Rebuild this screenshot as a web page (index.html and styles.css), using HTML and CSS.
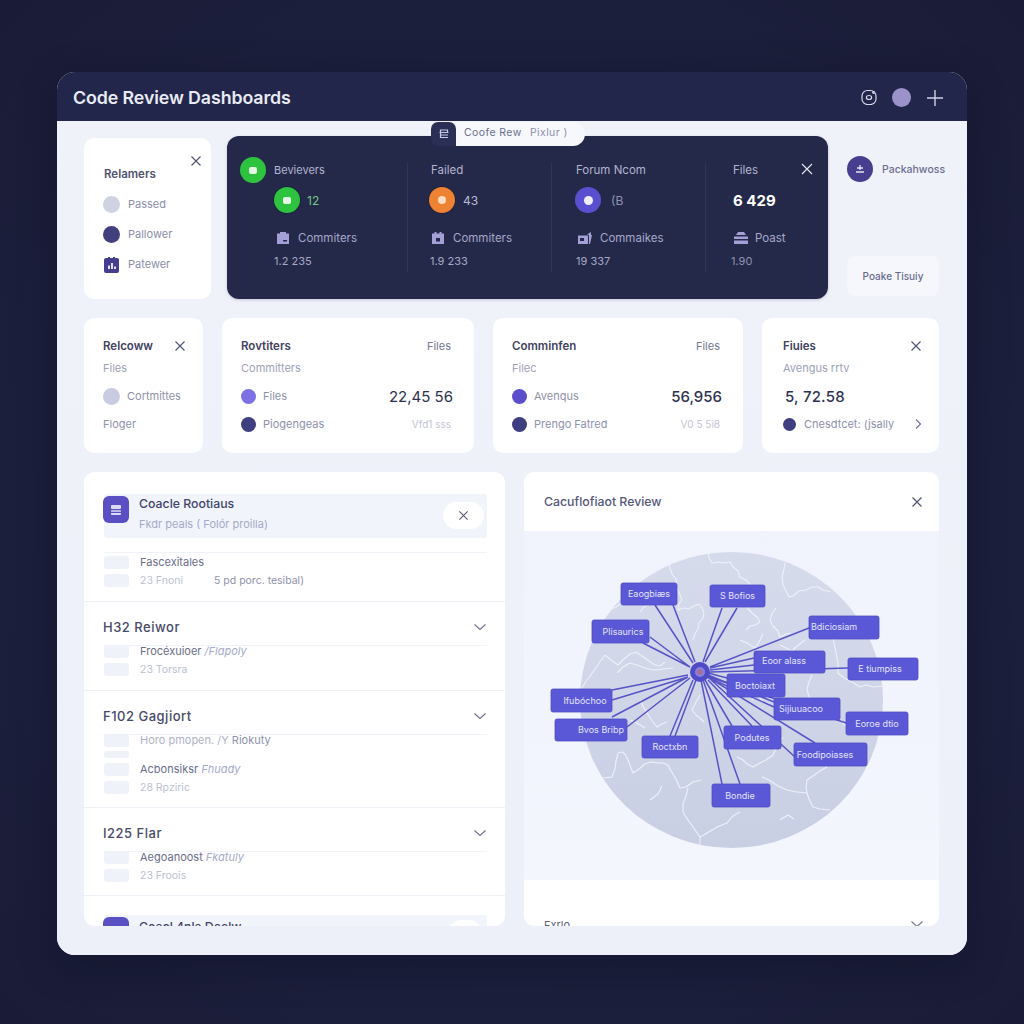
FILE: index.html
```html
<!DOCTYPE html>
<html lang="en">
<head>
<meta charset="utf-8">
<title>Code Review Dashboards</title>
<link rel="stylesheet" href="styles.css">
</head>
<body>
<div class="window">
  <header class="topbar">
    <h1 class="brand">Code Review Dashboards</h1>
    <div class="top-actions">
      <svg class="ig" viewBox="0 0 16 16"><rect x="1" y="1.500" width="14" height="14" rx="5.500"/><ellipse cx="8" cy="8.500" rx="2.600" ry="2"/><circle cx="12.500" cy="3.500" r=".8"/></svg>
      <span class="avatar"></span>
      <svg class="plus" viewBox="0 0 16 16"><path d="M8 0v16M0 8h16"/></svg>
    </div>
  </header>
  <main class="content">
    <div class="tab">
      <span class="tab-icon"><svg viewBox="0 0 14 14"><path d="M3.500 5V3h7v2M2.500 5.500h9M3.500 5.500v5h7.500M3 8h8"/></svg></span>
      <span class="tab-label">Coofe Rew <i>Pixlur )</i></span>
    </div>

    <section class="row-top">
      <div class="card legend">
        <svg class="x x-legend" viewBox="0 0 12 12"><path d="M1.500 1.500l9 9M10.500 1.500l-9 9"/></svg>
        <div class="legend-title">Relamers</div>
        <div class="legend-row"><span class="dot-17 c-grey"></span>Passed</div>
        <div class="legend-row"><span class="dot-17 c-navy"></span>Pallower</div>
        <div class="legend-row"><svg class="sq" viewBox="0 0 17 17"><path d="M1 4a2 2 0 0 1 2-2h2V1h2v1h3V1h2v1h2a2 2 0 0 1 2 2v11a2 2 0 0 1-2 2H3a2 2 0 0 1-2-2z" fill="#453d8f"/><path d="M5 13V9.500h2V13zM8 13V7h2v6zM11 13v-2.500h2V13z" fill="#e3e2f5"/></svg>Patewer</div>
      </div>

      <div class="stats">
        <svg class="x x-stats" viewBox="0 0 12 12"><path d="M1 1l10 10M11 1L1 11"/></svg>
        <div class="stat s1">
          <div class="s-head"><span class="pip green"><b></b></span>Bevievers</div>
          <div class="s-main ind1"><span class="pip green ring"><b></b></span><span class="num-green">12</span></div>
          <div class="s-sub ind2"><svg class="mini" viewBox="0 0 14 14"><path d="M1 2.500h3V1h6v1.500h3V13H1zM7 9h4v1.500H7z" fill-rule="evenodd"/></svg>Commiters</div>
          <div class="s-val ind1">1.2 235</div>
        </div>
        <div class="stat s2">
          <div class="s-head">Failed</div>
          <div class="s-main back"><span class="pip orange ring"><b></b></span>43</div>
          <div class="s-sub"><svg class="mini" viewBox="0 0 14 14"><path d="M1 2.500h2.500V1h2v1.500h3V1h2v1.500H13V13H1zM5 7v3.500h4V7z" fill-rule="evenodd"/></svg>Commiters</div>
          <div class="s-val back1">1.9 233</div>
        </div>
        <div class="stat s3">
          <div class="s-head">Forum Ncom</div>
          <div class="s-main back1"><span class="pip violet"><b></b></span><span class="dim gap3">(B</span></div>
          <div class="s-sub ind3"><svg class="mini" viewBox="0 0 14 14"><path d="M0 4.500h10V13H0zM2 7v3h4V7zM9 3.500L13 1v3h1l-2 9h-1V4z" fill-rule="evenodd"/></svg>Commaikes</div>
          <div class="s-val">19 337</div>
        </div>
        <div class="stat s4">
          <div class="s-head">Files</div>
          <div class="s-big">6 429</div>
          <div class="s-sub gap6"><svg class="mini wide" viewBox="0 0 16 14"><path d="M3 4l2-3h6l2 3zM1 5.500h14V8H1zM1 9.500h14V13H1z"/></svg>Poast</div>
          <div class="s-val back2 dim">1.90</div>
        </div>
      </div>

      <div class="side">
        <div class="side-user"><span class="side-badge"><svg viewBox="0 0 12 12"><path d="M6 2v5M3 5h6M2 9h8"/></svg></span>Packahwoss</div>
        <div class="side-btn">Poake Tisuiy</div>
      </div>
    </section>

    <section class="row-metrics">
      <div class="card metric">
        <div class="m-line m1"><strong>Relcoww</strong><svg class="x x-m" viewBox="0 0 12 12"><path d="M1.500 1.500l9 9M10.500 1.500l-9 9"/></svg></div>
        <div class="m-line m2">Files</div>
        <div class="m-line m3"><span class="dot-17 c-grey2"></span><span class="m-key">Cortmittes</span></div>
        <div class="m-line m4 m-plain">Floger</div>
      </div>
      <div class="card metric">
        <div class="m-line m1"><strong>Rovtiters</strong><span class="m-end">Files</span></div>
        <div class="m-line m2">Committers</div>
        <div class="m-line m3"><span class="dot-15 c-lilac"></span><span class="m-key">Files</span><span class="m-num">22,45 56</span></div>
        <div class="m-line m4"><span class="dot-15 c-navy2"></span><span class="m-key">Piogengeas</span><span class="m-faint">Vfd1 sss</span></div>
      </div>
      <div class="card metric">
        <div class="m-line m1"><strong>Comminfen</strong><span class="m-end">Files</span></div>
        <div class="m-line m2">Filec</div>
        <div class="m-line m3"><span class="dot-15 c-indigo"></span><span class="m-key">Avenqus</span><span class="m-num m-bold">56,956</span></div>
        <div class="m-line m4"><span class="dot-15 c-navy2"></span><span class="m-key">Prengo Fatred</span><span class="m-faint">V0 5 5i8</span></div>
      </div>
      <div class="card metric metric-last">
        <div class="m-line m1"><strong>Fiuies</strong><svg class="x x-m" viewBox="0 0 12 12"><path d="M1.500 1.500l9 9M10.500 1.500l-9 9"/></svg></div>
        <div class="m-line m2">Avengus rrtv</div>
        <div class="m-line m3"><span class="m-solo">5, 72.58</span></div>
        <div class="m-line m4"><span class="dot-13 c-navy2"></span><span class="m-key">Cnesdtcet: (jsally</span><svg class="chev-r" viewBox="0 0 8 12"><path d="M2 1.500L6.500 6 2 10.500"/></svg></div>
      </div>
    </section>

    <section class="row-main">
      <div class="card list">
        <div class="sec sec1">
          <div class="strip">
            <span class="strip-icon"><svg viewBox="0 0 14 14"><path d="M3 2h8a1 1 0 0 1 1 1v2a1 1 0 0 1-1 1H3a1 1 0 0 1-1-1V3a1 1 0 0 1 1-1zM3 7.200h8a1 1 0 0 1 1 1v.6H2v-.6a1 1 0 0 1 1-1zM2 10h10v1a1 1 0 0 1-1 1H3a1 1 0 0 1-1-1z"/></svg></span>
            <div class="strip-text"><div class="strip-title">Coacle Rootiaus</div><div class="strip-sub">Fkdr peals ( Folór proilla)</div></div>
            <span class="strip-close"><svg class="x x-pill" viewBox="0 0 12 12"><path d="M1.500 1.500l9 9M10.500 1.500l-9 9"/></svg></span>
          </div>
          <div class="rows rows-first">
            <div class="rw"><span class="thumb"></span><span class="t-main">Fascexitales</span></div>
            <div class="rw"><span class="thumb"></span><span class="t-faint">23 Fnoni</span><span class="t-extra">5 pd porc. tesibal)</span></div>
          </div>
        </div>
        <div class="sec sec2">
          <div class="sec-head"><span>H32 Reiwor</span><svg class="chev" viewBox="0 0 14 8"><path d="M1.500 1.500L7 6.500l5.500-5"/></svg></div>
          <div class="rows">
            <div class="rw"><span class="thumb"></span><span class="t-main">Frocéxuioer <em>/Flapoly</em></span></div>
            <div class="rw"><span class="thumb"></span><span class="t-faint">23 Torsra</span></div>
          </div>
        </div>
        <div class="sec sec3">
          <div class="sec-head"><span>F102 Gagjiort</span><svg class="chev" viewBox="0 0 14 8"><path d="M1.500 1.500L7 6.500l5.500-5"/></svg></div>
          <div class="rows">
            <div class="rw"><span class="thumb"></span><span class="t-soft">Horo pmopen. /Y <u>Riokuty</u></span></div>
            <span class="thumb thin"></span>
            <div class="rw"><span class="thumb"></span><span class="t-main">Acbonsiksr <em>Fhuady</em></span></div>
            <div class="rw"><span class="thumb"></span><span class="t-faint">28 Rpziric</span></div>
          </div>
        </div>
        <div class="sec sec4">
          <div class="sec-head"><span>I225 Flar</span><svg class="chev" viewBox="0 0 14 8"><path d="M1.500 1.500L7 6.500l5.500-5"/></svg></div>
          <div class="rows">
            <div class="rw"><span class="thumb"></span><span class="t-main">Aegoanoost <em>Fkatuly</em></span></div>
            <div class="rw"><span class="thumb"></span><span class="t-faint">23 Froois</span></div>
          </div>
        </div>
        <div class="sec5">
          <div class="strip">
            <span class="strip-icon"></span>
            <div class="strip-text"><div class="strip-title strip-low">Coacl 4nla Deelw</div></div>
            <span class="strip-close small"></span>
          </div>
        </div>
      </div>

      <div class="card panel">
        <div class="panel-head"><span>Cacuflofiaot Review</span><svg class="x x-panel" viewBox="0 0 12 12"><path d="M1.500 1.500l9 9M10.500 1.500l-9 9"/></svg></div>
        <div class="map">
          <svg class="map-svg" viewBox="524 531 415 349" width="415" height="349">
            <defs>
              <clipPath id="disc"><ellipse cx="731.500" cy="700" rx="151.500" ry="148"/></clipPath>
              <linearGradient id="discfill" x1="0" y1="0" x2="0" y2="1"><stop offset="0" stop-color="#d6dbec"/><stop offset="1" stop-color="#c9cfe3"/></linearGradient>
            </defs>
            <ellipse cx="731.500" cy="700" rx="151.500" ry="148" fill="url(#discfill)"/>
            <g class="borders" clip-path="url(#disc)">
              <path d="M669 565l3 9 4 5 1 9 3 7 2 5-3 4-1 6 6-2 5 1 5-3 5-2 3 4 2 5-1 5-4 5-1 6-3 5-2 6"/>
              <path d="M708 552l1 6 3 5 6-1 5 1 7-1 3 5 5 4 2 6 6 3 4 4 2 4-3 5-1 6-3 5 3 5 4 4 5 4 3 5-5 3-5 1-4 4"/>
              <path d="M785 563l-1 6-2 8 1 8 3 6 3 6 4-1 6-5 7-1 6-3 6 0 5 3 8 2"/>
              <path d="M776 608l-4 6-2 6 3 6 5 5 2 6 6-3 5-1M780 645l6 3 6 3 4-4 5-4 4-3"/>
              <path d="M597 618l6-4 6-4 7-3 8-6 5-4 3-6M640 612l4-5 5-3 2-5"/>
              <path d="M582 688l5-8 6-8 6-9 6-8 6 5 7 5 6-6 6-5 6-2 6 4 7 5 6 4 5 1 5-4M617 673l6-6 7-4 7 2 8 3 8 2 10-1 10-1"/>
              <path d="M603 778l9-1 3-8 1-8 2-8 4-1 3 2 3 6 5 13 6-4 6-5 6-2 7 1 5 0 5 2 3 6 5 8 4 9 6-1 7-5 8-2"/>
              <path d="M688 788l-2 8-3 8 0 8 5 8 5 7 7 10 0 8M700 837l7-4 10-6 10-4 6-7 7-4"/>
              <path d="M762 777l7 3 9 6 9 4 10 2 10 1 2 6 4 8 7 2 10 1M807 793l-1-6 1-7 6-4 7-5 7-4"/>
              <path d="M737 757l6 3 4 4 6 3 7-4 6-3 7-5 3-7 3-6 4-5M660 745l8-2 9-1 8-2"/>
              <path d="M833 633l1 10 2 10 2 10 0 10 6 5 8 4 8 5 6-2 8 2 8-1M812 675l-3 7-2 7 2 8 2 8 1 8"/>
              <path d="M640 700l4 8 5 8 4 6 4 5 5-3 5-2M630 720l7 3 8 5M700 695l-4 7-4 8 4 5 4 3 4 4"/>
              <path d="M740 640l7 3 8 5 4-6 4-8M752 700l6-5 5 7 6 2"/>
              <path d="M605 740l10-3 8 4M650 800l8-6 4-8M780 820l8-5 6 4M840 720l6 6 8 3"/>
            </g>
            <g class="spokes">
              <path d="M655 605L693 663M673 605L695 662M722 608L703 662M737 608L705 662M650 637L690 667M643 643L690 667"/>
              <path d="M809 628L710 667M754 658L710 668M754 665L710 670M848 668L710 672M727 678L708 673M727 683L708 677"/>
              <path d="M774 707L707 677M774 702L708 675M846 723L708 676M612 690L688 675M612 700L688 677M612 717L688 677M627 727L690 678"/>
              <path d="M670 736L693 680M675 736L696 680M722 784L701 680M740 784L703 680M732 726L705 680M752 726L708 680M815 743L708 677M795 757L708 677"/>
            </g>
            <circle cx="700" cy="672" r="10" fill="#4f4bc6"/>
            <circle cx="700" cy="672" r="5" fill="#8681dc"/>
            <circle cx="700" cy="672" r="2.500" fill="#b3688f"/>
            <g class="node"><rect x="621" y="583" width="56" height="22" rx="2"/><text x="649" y="597">Eaogbiæs</text></g>
            <g class="node"><rect x="710" y="585" width="55" height="22" rx="2"/><text x="737.500" y="599">S Bofios</text></g>
            <g class="node"><rect x="592" y="620" width="57" height="23" rx="2"/><text x="623" y="635">Plisaurics</text></g>
            <g class="node"><rect x="809" y="616" width="70" height="23" rx="2"/><text x="834" y="630">Bdiciosiam</text></g>
            <g class="node"><rect x="754" y="651" width="71" height="22" rx="2"/><text x="784" y="664">Eoor alass</text></g>
            <g class="node"><rect x="848" y="658" width="70" height="22" rx="2"/><text x="880" y="672">E tiumpiss</text></g>
            <g class="node"><rect x="727" y="674" width="58" height="23" rx="2"/><text x="755" y="689">Boctoiaxt</text></g>
            <g class="node"><rect x="551" y="689" width="61" height="23" rx="2"/><text x="585" y="704">Ifubóchoo</text></g>
            <g class="node"><rect x="774" y="698" width="66" height="22" rx="2"/><text x="801" y="712">Sijiuuacoo</text></g>
            <g class="node"><rect x="846" y="712" width="62" height="23" rx="2"/><text x="877" y="727">Eoroe dtio</text></g>
            <g class="node"><rect x="555" y="719" width="72" height="22" rx="2"/><text x="601" y="733">Bvos Bribp</text></g>
            <g class="node"><rect x="642" y="736" width="56" height="22" rx="2"/><text x="670" y="750">Roctxbn</text></g>
            <g class="node"><rect x="724" y="726" width="57" height="23" rx="2"/><text x="752" y="741">Podutes</text></g>
            <g class="node"><rect x="794" y="743" width="73" height="23" rx="2"/><text x="825" y="758">Foodipoiases</text></g>
            <g class="node"><rect x="712" y="784" width="58" height="23" rx="2"/><text x="740" y="799">Bondie</text></g>
          </svg>
        </div>
        <div class="panel-foot"><span>Fxrlo</span><svg class="chev" viewBox="0 0 14 8"><path d="M1.500 1.500L7 6.500l5.500-5"/></svg></div>
      </div>
    </section>
  </main>
</div>
</body>
</html>
```

FILE: styles.css
```css
* { box-sizing: border-box; }
html, body { margin: 0; height: 100%; }
body {
  background: radial-gradient(circle at 50% 50%, #20234a 0%, #1c1f3c 60%, #1a1c37 100%);
  font-family: "Inter", "Liberation Sans", sans-serif;
  color: #3a3d5c;
  overflow: hidden;
}
svg { display: block; flex: none; }

.window {
  width: 910px;
  height: 883px;
  margin: 72px 0 0 57px;
  border-radius: 18px;
  overflow: hidden;
  background: #eef1f9;
  display: flex;
  flex-direction: column;
  box-shadow: 0 10px 40px rgba(8, 9, 25, .3);
}
.topbar {
  height: 49px;
  flex: none;
  background: #22264a;
  display: flex;
  align-items: center;
  justify-content: space-between;
  padding: 2px 24px 0 16px;
}
.brand { margin: 0; font-size: 17.800px; font-weight: 600; color: #e8eaf4; letter-spacing: -.1px; }
.top-actions { display: flex; align-items: center; gap: 15px; }
.ig { width: 16px; height: 16px; fill: none; stroke: #d8d9ea; stroke-width: 1.200; margin-top: -2px; }
.avatar { width: 19px; height: 19px; border-radius: 50%; background: #9b92c9; }
.plus { width: 16px; height: 16px; fill: none; stroke: #d2d3e6; stroke-width: 1.400; margin-left: 1px; }

.content {
  position: relative;
  flex: 1;
  min-height: 0;
  padding: 17px 28px 29px 27px;
  display: flex;
  flex-direction: column;
  gap: 19px;
  background: linear-gradient(#f0f2fa, #edf0f8);
}
.tab {
  position: absolute;
  left: 374px;
  top: 1px;
  height: 24px;
  display: flex;
  z-index: 2;
}
.tab-icon {
  width: 25px;
  background: #2b2f55;
  border-radius: 7px 7px 0 7px;
  display: flex;
  align-items: center;
  justify-content: center;
}
.tab-icon svg { width: 14px; height: 14px; fill: none; stroke: #c9cae6; stroke-width: 1.200; }
.tab-label {
  width: 129px;
  background: #f7f8fc;
  border-radius: 0 12px 12px 0;
  padding: 0 0 2px 8px;
  font-size: 10.500px;
  line-height: 22px;
  letter-spacing: .4px;
  color: #6a6d8c;
  white-space: nowrap;
}
.tab-label i { font-style: normal; color: #8d8fb0; margin-left: 5px; }

.card { background: #fff; border-radius: 10px; position: relative; }
.x { fill: none; stroke: #4d5070; stroke-width: 1.100; }
.x-legend, .x-stats { position: absolute; }
.x-legend { width: 12px; height: 12px; left: 106px; top: 17px; }
.x-stats { width: 12px; height: 12px; right: 15px; top: 27px; stroke: #e6e7f3; }

.row-top { display: flex; height: 161px; flex: none; }
.legend { width: 127px; margin-right: 16px; padding: 26px 0 0 20px; }
.legend-title { height: 20px; line-height: 20px; margin-bottom: 5px; font-size: 11.500px; font-weight: 600; color: #50526f; }
.legend-row { height: 30px; display: flex; align-items: center; gap: 8px; font-size: 11px; color: #8b8ea8; margin-left: -1px; }
.dot-17 { width: 17px; height: 17px; border-radius: 50%; flex: none; }
.dot-15 { width: 15px; height: 15px; border-radius: 50%; flex: none; }
.dot-13 { width: 13px; height: 13px; border-radius: 50%; flex: none; }
.c-grey { background: #cfd2e1; }
.c-grey2 { background: #c9cbe1; }
.c-navy { background: #423f7e; }
.c-lilac { background: #7c70e4; }
.c-navy2 { background: #3f3e80; }
.c-indigo { background: #5b4ecb; }
.sq { width: 17px; height: 17px; }

.stats {
  width: 601px;
  height: 163px;
  margin: -2px 19px 0 0;
  flex: none;
  position: relative;
  background: #252949;
  border-radius: 12px;
  display: grid;
  grid-template-columns: 180px 144px 154px 123px;
  padding-top: 27px;
  box-shadow: 0 1px 3px rgba(30, 32, 70, .2);
}
.stat { height: 109px; font-size: 11px; color: #a3a6c6; }
.s1 { padding-left: 13px; }
.s2, .s3, .s4 { border-left: 1px solid #31355a; }
.s2 { padding-left: 23px; }
.s3 { padding-left: 24px; }
.s4 { padding-left: 27px; }
.s-head { height: 14px; display: flex; align-items: center; gap: 8px; font-size: 11.500px; color: #b2b5d0; }
.s1 .s-head { font-size: 11px; }
.s-main { height: 32px; margin-top: 7px; display: flex; align-items: center; gap: 7px; font-size: 12px; color: #b8bad4; }
.s-big { height: 32px; margin-top: 7px; display: flex; align-items: center; font-size: 15px; font-weight: 700; color: #fff; }
.s-sub { height: 22px; margin-top: 11px; display: flex; align-items: center; gap: 8px; font-size: 11.500px; color: #a5a8ca; }
.s-val { height: 23px; display: flex; align-items: center; font-size: 11px; color: #a6a9c6; }
.ind1 { margin-left: 34px; }
.ind2 { margin-left: 36px; }
.ind3 { margin-left: 2px; }
.back { margin-left: -2px; gap: 8px; }
.back1 { margin-left: -1px; }
.back2 { margin-left: -2px; }
.gap6 { gap: 6px; }
.gap3 { margin-left: 3px; }
.dim { color: #8f92b3; }
.num-green { color: #72c88a; }
.pip {
  width: 26px;
  height: 26px;
  border-radius: 50%;
  flex: none;
  display: flex;
  align-items: center;
  justify-content: center;
}
.pip b { width: 8px; height: 7px; border-radius: 2px; background: #e5f7e5; }
.green { background: #2dc33f; }
.orange { background: #ee8233; }
.orange b { background: #fbdcc4; border-radius: 50%; width: 8px; height: 8px; }
.violet { background: #5a50cf; }
.violet b { background: #f0eefc; border-radius: 50%; width: 9px; height: 9px; }
.ring { box-shadow: 0 0 0 1px rgba(10, 12, 30, .25); }
.mini { width: 14px; height: 14px; fill: #a59fd8; }
.mini.wide { width: 16px; }

.side { width: 92px; flex: none; display: flex; flex-direction: column; justify-content: space-between; padding: 18px 0 3px; }
.side-user { display: flex; align-items: center; gap: 9px; font-size: 10.500px; font-weight: 500; color: #6c6e8f; white-space: nowrap; height: 26px; }
.side-badge { width: 26px; height: 26px; border-radius: 50%; background: #473e8f; display: flex; align-items: center; justify-content: center; flex: none; }
.side-badge svg { width: 12px; height: 12px; fill: none; stroke: #e6e4f6; stroke-width: 1.300; }
.side-btn { height: 40px; border-radius: 8px; background: #f5f7fc; display: flex; align-items: center; justify-content: center; font-size: 10px; font-weight: 500; color: #6a6b90; }

.row-metrics { display: grid; grid-template-columns: 119px 252px 250px 177px; gap: 19px; height: 135px; flex: none; }
.metric { padding: 17px 23px 0 19px; }
.metric-last { padding-left: 21px; }
.m-line { display: flex; align-items: center; font-size: 11px; color: #8e91aa; }
.m1 { height: 22px; justify-content: space-between; }
.m1 strong { font-size: 11.500px; font-weight: 600; color: #3f4260; }
.m2 { height: 22px; margin-bottom: 3px; color: #9ea1b9; font-size: 11px; }
.m3, .m4 { height: 28px; }
.m-plain { color: #8e91aa; }
.m-end { font-size: 11px; color: #74778f; }
.m-key { margin-left: 7px; white-space: nowrap; }
.dot-13 + .m-key { margin-left: 8px; }
.m-num { margin-left: auto; margin-right: -2px; font-size: 15px; color: #2e3150; white-space: nowrap; }
.m-bold { font-weight: 500; }
.m-solo { font-size: 15px; color: #2e3150; margin-left: 2px; font-weight: 500; letter-spacing: .2px; }
.m-faint { margin-left: auto; font-size: 10px; color: #c2c5d5; white-space: nowrap; }
.x-m { width: 12px; height: 12px; margin-right: -6px; }
.chev-r { width: 8px; height: 12px; margin-left: auto; fill: none; stroke: #6d7090; stroke-width: 1.100; margin-right: -6px; }

.row-main { display: grid; grid-template-columns: 421px 415px; gap: 19px; height: 454px; flex: none; }
.list { overflow: hidden; }
.sec { border-bottom: 1px solid #eef1f8; padding: 0 18px 0 20px; }
.sec1 { height: 130px; padding-top: 22px; }
.sec2 { height: 89px; padding-top: 13px; }
.sec3 { height: 117px; padding-top: 13px; }
.sec4 { height: 88px; padding-top: 13px; }
.strip { height: 44px; background: #f1f4fb; border-radius: 3px; display: flex; }
.strip-icon {
  width: 26px;
  height: 27px;
  margin: 2px 10px 0 -1px;
  border-radius: 6px;
  background: #5a4fc3;
  display: flex;
  align-items: center;
  justify-content: center;
  flex: none;
}
.strip-icon svg { width: 14px; height: 14px; fill: #dcdaf5; }
.strip-title { height: 20px; line-height: 20px; font-size: 12.300px; font-weight: 500; color: #42456a; }
.strip-sub { height: 20px; line-height: 20px; font-size: 11px; color: #a3a9ca; }
.strip-close {
  width: 41px;
  height: 27px;
  margin: 8px 3px 0 auto;
  background: #fff;
  border-radius: 14px;
  display: flex;
  align-items: center;
  justify-content: center;
}
.x-pill { width: 11px; height: 11px; }
.rows { margin-top: -4px; }
.rows-first { margin-top: 14px; border-top: 1px solid #f0f2f9; }
.rw { height: 18px; display: flex; align-items: center; gap: 11px; font-size: 11px; }
.thumb { width: 25px; height: 13px; background: #eff2f9; border-radius: 3px; flex: none; display: block; }
.thumb.thin { height: 7px; margin: 2px 0; }
.t-main { color: #6a6d88; }
.t-main em { color: #a6aac8; font-style: italic; }
.t-soft { color: #b0b3c8; }
.t-soft u { text-decoration: none; color: #8f92ad; }
.t-faint { color: #bcbfd0; font-size: 10.500px; width: 63px; white-space: nowrap; }
.t-extra { color: #8f92ab; font-size: 10.500px; white-space: nowrap; }
.sec-head {
  height: 31px;
  padding-bottom: 6px;
  border-bottom: 1px solid #f0f2f9;
  display: flex;
  align-items: center;
  justify-content: space-between;
  font-size: 13px;
  font-weight: 500;
  letter-spacing: .5px;
  color: #474a66;
  margin-left: -1px;
  position: relative;
}
.chev { width: 14px; height: 8px; fill: none; stroke: #6d7090; stroke-width: 1.100; }
.sec5 { padding: 19px 18px 0 20px; }
.strip-low { padding-top: 2px; }
.small { width: 34px; margin: 5px 5px 0 auto; }

.panel { overflow: hidden; border-radius: 10px; display: flex; flex-direction: column; }
.panel-head {
  height: 59px;
  flex: none;
  display: flex;
  align-items: center;
  justify-content: space-between;
  padding: 0 16px 0 20px;
  font-size: 12.300px;
  font-weight: 500;
  color: #54577a;
}
.x-panel { width: 12px; height: 12px; }
.map { height: 349px; flex: none; background: linear-gradient(#f0f3fc, #f3f6fd); }
.borders { fill: none; stroke: #eef1f9; stroke-width: 1.100; stroke-linejoin: round; }
.spokes { fill: none; stroke: #5653c6; stroke-width: 1.500; }
.node rect { fill: #5a58d6; stroke: #4f4dc4; stroke-width: .8; }
.node text {
  font-family: "Inter", "Liberation Sans", sans-serif;
  font-size: 9px;
  fill: #e2e3fb;
  text-anchor: middle;
}
.panel-foot {
  flex: 1;
  display: flex;
  justify-content: space-between;
  padding: 38px 15px 0 20px;
  font-size: 11px;
  color: #5b5e7c;
}
.panel-foot .chev { margin-top: 2px; }
```
